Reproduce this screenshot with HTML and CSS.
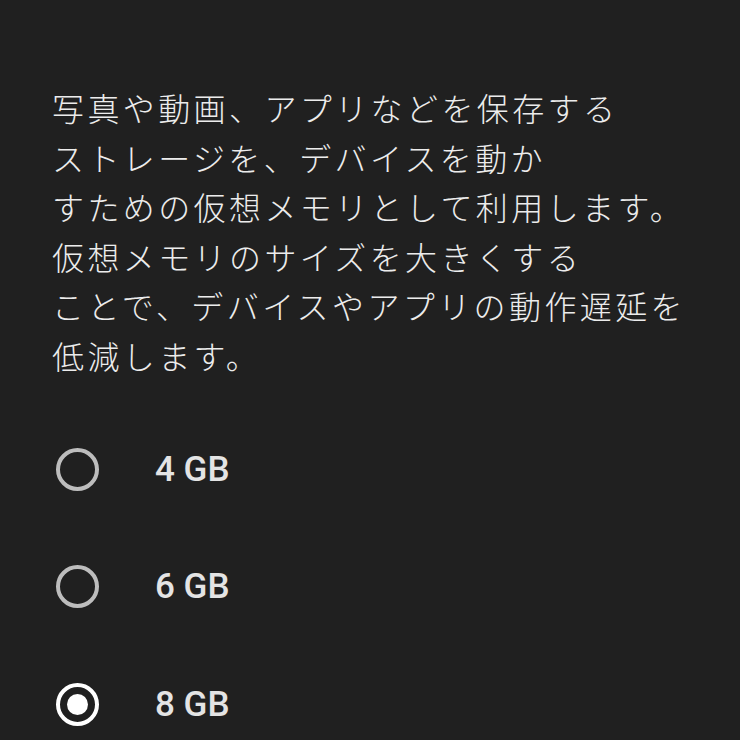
FILE: index.html
```html
<!DOCTYPE html>
<html lang="ja">
<head>
  <meta charset="UTF-8">
  <meta name="viewport" content="width=device-width, initial-scale=1.0">
  <title>仮想メモリ</title>
  <link rel="stylesheet" href="styles.css">
</head>
<body>
  <div class="settings-page">
    <p class="description">
      写真や動画、アプリなどを保存する<br>
      ストレージを、デバイスを動か<br>
      すための仮想メモリとして利用します。<br>
      仮想メモリのサイズを大きくする<br>
      ことで、デバイスやアプリの動作遅延を<br>
      低減します。
    </p>
    <form class="size-list">
      <label class="size-option">
        <input type="radio" name="size" value="4">
        <span class="radio-mark"></span>
        <span class="size-label">4 GB</span>
      </label>
      <label class="size-option">
        <input type="radio" name="size" value="6">
        <span class="radio-mark"></span>
        <span class="size-label">6 GB</span>
      </label>
      <label class="size-option">
        <input type="radio" name="size" value="8" checked>
        <span class="radio-mark"></span>
        <span class="size-label">8 GB</span>
      </label>
    </form>
  </div>
</body>
</html>
```

FILE: styles.css
```css
body {
  margin: 0;
  background-color: #202020;
  color: #ececec;
  font-family: "Noto Sans CJK JP", "Noto Sans", sans-serif;
  overflow: hidden;
}

.settings-page {
  padding: 83px 0 0 52px;
}

.description {
  margin: 0;
  font-size: 32px;
  font-weight: 300;
  line-height: 49.6px;
  letter-spacing: 3.4px;
}

.size-list {
  margin-top: 30px;
  display: flex;
  flex-direction: column;
}

.size-option {
  display: flex;
  align-items: center;
  height: 117.5px;
  cursor: pointer;
}

/* hide the native radio, draw our own circle */
.size-option input {
  display: none;
}

.radio-mark {
  box-sizing: border-box;
  width: 43px;
  height: 43px;
  margin-left: 4px;
  border: 4px solid #bdbdbd;
  border-radius: 50%;
  display: flex;
  align-items: center;
  justify-content: center;
}

.size-option input:checked + .radio-mark {
  border-color: #ffffff;
}

.size-option input:checked + .radio-mark::after {
  content: '';
  width: 21px;
  height: 21px;
  border-radius: 50%;
  background-color: #ffffff;
}

.size-label {
  margin-left: 56px;
  font-family: Roboto, "Noto Sans", sans-serif;
  font-weight: 500;
  font-size: 35px;
  color: #e4e4e4;
}
```
